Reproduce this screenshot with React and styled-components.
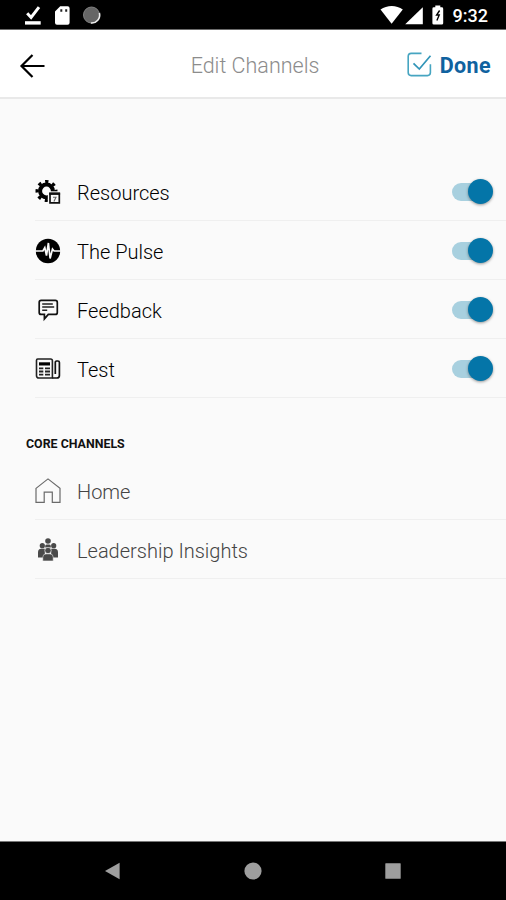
import styled, { createGlobalStyle } from "styled-components";

const channels = [
  { name: "Resources", icon: ResourcesIcon },
  { name: "The Pulse", icon: PulseIcon },
  { name: "Feedback", icon: FeedbackIcon },
  { name: "Test", icon: NewsIcon },
];

const coreChannels = [
  { name: "Home", icon: HomeIcon },
  { name: "Leadership Insights", icon: PeopleIcon },
];

export default function App() {
  return (
    <>
      <GlobalStyle />
      <Screen>
        <StatusBar>
          <StatusLeft />
          <StatusRight />
          <Clock>9:32</Clock>
        </StatusBar>
        <Header>
          <BackButton aria-label="Back">
            <svg width="26" height="26" viewBox="0 0 26 26" fill="none">
              <path
                d="M25.500 13H2.500M13.500 2 2.500 13l11 11"
                stroke="#000"
                strokeWidth="2.200"
              />
            </svg>
          </BackButton>
          <Title>Edit Channels</Title>
          <DoneButton>
            <svg width="25" height="25" viewBox="0 0 25 25" fill="none">
              <path
                d="M14.5 1.4H4.2a3 3 0 0 0-3 3v16.2a3 3 0 0 0 3 3h16.2a3 3 0 0 0 3-3v-8.3"
                stroke="#46a5c1"
                strokeWidth="1.6"
              />
              <path
                d="m6.500 11.300 5.800 5.700L23.500 3.700"
                stroke="#3295b8"
                strokeWidth="1.7"
              />
            </svg>
            <span>Done</span>
          </DoneButton>
        </Header>
        <Content>
          <List>
            {channels.map(({ name, icon: Icon }) => (
              <Row key={name}>
                <Icon />
                <Name>{name}</Name>
                <Switch role="switch" aria-checked="true" aria-label={name}>
                  <Thumb />
                </Switch>
              </Row>
            ))}
          </List>
          <SectionTitle>CORE CHANNELS</SectionTitle>
          <List>
            {coreChannels.map(({ name, icon: Icon }) => (
              <Row key={name}>
                <Icon />
                <Name $muted>{name}</Name>
              </Row>
            ))}
          </List>
        </Content>
        <NavBar>
          <svg width="18" height="20" viewBox="0 0 18 20" fill="#9e9e9e">
            <path d="M1 10 15.600 1.700v16.600z" />
          </svg>
          <svg width="18" height="20" viewBox="0 0 18 20" fill="#9e9e9e">
            <circle cx="9" cy="10" r="8.600" />
          </svg>
          <svg width="18" height="20" viewBox="0 0 18 20" fill="#9e9e9e">
            <rect x="1.300" y="2.300" width="15.400" height="15.400" rx="0.500" />
          </svg>
        </NavBar>
      </Screen>
    </>
  );
}

function StatusLeft() {
  return (
    <svg width="84" height="22" viewBox="0 0 84 22">
      <path d="m3.200 9.200 3.900 4.200L15 3.200" fill="none" stroke="#fff" strokeWidth="3" />
      <path d="M1 17.200h15.700v3.400H1z" fill="#fff" />
      <path
        d="M36.200 2.200h7.400a2 2 0 0 1 2 2v14.500a2 2 0 0 1-2 2H33a2 2 0 0 1-2-2V7.400z"
        fill="#fff"
      />
      <path d="M36.300 5.300h2v2.400h-2zM41.200 5.300h2v2.400h-2z" fill="#222" />
      <circle cx="67.500" cy="11" r="8" fill="#666" stroke="#808080" strokeWidth="1" />
      <path d="M75.400 9a8 8 0 0 1-8.500 10" fill="none" stroke="#eee" strokeWidth="1.600" />
    </svg>
  );
}

function StatusRight() {
  return (
    <StatusIcons width="66" height="22" viewBox="0 0 66 22" fill="#fff">
      <path d="M0.500 5.600C7 .7 16.500.7 22.800 5.600L11.600 19.800z" />
      <path d="M42.800 3.200v17.100H25.200z" />
      <path d="M55.300 3.300V1.500h5v1.800h1.500a1.400 1.400 0 0 1 1.400 1.400v14.500a1.400 1.400 0 0 1-1.400 1.400h-8a1.400 1.400 0 0 1-1.400-1.400V4.700a1.400 1.400 0 0 1 1.400-1.400z" />
      <path
        d="m59.600 6.500-3 4.500h2.600l-2.300 5.500"
        fill="none"
        stroke="#000"
        strokeWidth="1.400"
      />
    </StatusIcons>
  );
}

function ResourcesIcon() {
  return (
    <svg width="26" height="26" viewBox="0 0 26 26" fill="none">
      <circle cx="11.500" cy="12" r="6.400" stroke="#000" strokeWidth="4" />
      <circle
        cx="11.500"
        cy="12"
        r="9.400"
        stroke="#000"
        strokeWidth="3.200"
        strokeDasharray="3.300 4.083"
        strokeDashoffset="1.650"
      />
      <path d="M12.800 12.300H26V26H12.800z" fill="#fafafa" />
      <path d="M15 14.300h9.300v9.600H15z" stroke="#111" strokeWidth="1.700" />
      <path d="M14.200 14.800h10.900" stroke="#111" strokeWidth="2.200" />
      <path d="M18 18.300h3L18.900 22.500" stroke="#666" strokeWidth="1.100" />
    </svg>
  );
}

function PulseIcon() {
  return (
    <svg width="26" height="26" viewBox="0 0 26 26" fill="none">
      <circle cx="13" cy="13" r="12.200" fill="#000" />
      <path
        d="M0 13h7.900l1.900-3.300 1.700 7.800 1.900-12.500 1.700 15.500 2.400-9.500 1.600 2H26"
        stroke="#fafafa"
        strokeWidth="1.700"
      />
    </svg>
  );
}

function FeedbackIcon() {
  return (
    <svg width="26" height="26" viewBox="0 0 26 26" fill="none">
      <path
        d="M6.200 3.400h14.100a2 2 0 0 1 2 2v10a2 2 0 0 1-2 2h-7L9.400 21.900v-4.500H6.200a2 2 0 0 1-2-2v-10a2 2 0 0 1 2-2z"
        stroke="#111"
        strokeWidth="1.700"
      />
      <path d="M7.200 6.900h10.600M7.200 10h12M7.200 13.300h5" stroke="#222" strokeWidth="1.500" />
    </svg>
  );
}

function NewsIcon() {
  return (
    <svg width="26" height="26" viewBox="0 0 26 26" fill="none">
      <path
        d="M2.700 3h12.900a1.800 1.800 0 0 1 1.800 1.800v17.200H3.700a2.200 2.200 0 0 1-2.200-2.200V4.200A1.200 1.200 0 0 1 2.700 3z"
        stroke="#222"
        strokeWidth="1.600"
      />
      <path
        d="M17.400 22h4.400a2.600 2.600 0 0 0 2.600-2.600V6.500a1.500 1.500 0 0 0-1.500-1.500h-1.300a1.300 1.300 0 0 0-1.300 1.300v11.700"
        stroke="#111"
        strokeWidth="1.700"
      />
      <path d="M4 7.900h11" stroke="#000" strokeWidth="3.200" />
      <path
        d="M4 12.400h4.300M10 12.400h5M4 15.500h4.300M10 15.500h5M4 18.700h4.300M10 18.700h5"
        stroke="#222"
        strokeWidth="1.800"
      />
    </svg>
  );
}

function HomeIcon() {
  return (
    <svg width="26" height="26" viewBox="0 0 26 26" fill="none">
      <path
        d="M1 10.400 13 .9l12 9.500v14h-7.700V14.200H9.200v10.200H1z"
        stroke="#6a6a6a"
        strokeWidth="1.200"
      />
    </svg>
  );
}

function PeopleIcon() {
  return (
    <svg width="26" height="26" viewBox="0 0 26 26" fill="#4a4a4a">
      <circle cx="13" cy="4" r="2.800" />
      <circle cx="7.300" cy="8.700" r="2.600" />
      <circle cx="18.700" cy="8.700" r="2.600" />
      <path d="M10.200 10.600V9q0-1.500 1.500-1.500h2.600q1.500 0 1.500 1.500v1.600z" />
      <path d="M3 20.500v-5q0-3.700 3.200-3.700h3.600v8.700zM23 20.500v-5q0-3.700-3.200-3.700h-3.600v8.700z" />
      <circle cx="13" cy="13.500" r="3.100" stroke="#fafafa" strokeWidth="0.500" />
      <path
        d="M7.800 23.900v-3.600q0-3.400 3.200-3.400h4q3.200 0 3.200 3.400v3.600z"
        stroke="#fafafa"
        strokeWidth="0.500"
      />
    </svg>
  );
}

const GlobalStyle = createGlobalStyle`
  * {
    box-sizing: border-box;
  }
  body {
    margin: 0;
    font-family: Roboto, "Liberation Sans", sans-serif;
  }
  svg {
    flex-shrink: 0;
  }
`;

const Screen = styled.div`
  display: flex;
  flex-direction: column;
  width: 506px;
  height: 900px;
  overflow: hidden;
  background: #fafafa;
`;

const StatusBar = styled.div`
  display: flex;
  align-items: center;
  height: 30px;
  padding: 1px 18px 0 24px;
  color: #fff;
  background: #000;
  border-bottom: 1px solid #6b6b6b;
`;

const StatusIcons = styled.svg`
  margin-left: auto;
`;

const Clock = styled.span`
  margin-left: 7px;
  padding-top: 2px;
  font-size: 18px;
  font-weight: 500;
  line-height: 22px;
`;

const Header = styled.header`
  display: grid;
  grid-template-columns: 1fr auto 1fr;
  align-items: center;
  height: 69px;
  padding: 2px 15px 0 19px;
  background: #fff;
  border-bottom: 2px solid #e9e9e9;
`;

const BackButton = styled.button`
  display: flex;
  padding: 2px 0 0;
  border: 0;
  background: none;
`;

const Title = styled.h1`
  margin: 0;
  padding-top: 2px;
  color: #8c8c8c;
  font-size: 21.500px;
  font-weight: 300;
`;

const DoneButton = styled.button`
  display: flex;
  align-items: center;
  justify-content: flex-end;
  gap: 8px;
  padding: 0;
  border: 0;
  background: none;
  color: #10629f;
  font-family: inherit;
  font-size: 21.500px;
  font-weight: 700;

  svg {
    margin-bottom: 1px;
  }
  span {
    padding-top: 1px;
    letter-spacing: 0.4px;
  }
`;

const Content = styled.main`
  flex: 1;
  padding-top: 63px;
`;

const List = styled.ul`
  margin: 0;
  padding: 0 0 0 35px;
  list-style: none;
`;

const Row = styled.li`
  display: flex;
  align-items: center;
  height: 59px;
  padding: 1px 13px 0 0;
  border-bottom: 1px solid #efefef;

  & > svg {
    margin-top: 1px;
  }
`;

const Name = styled.span`
  flex: 1;
  margin-left: 16px;
  padding-top: 2px;
  color: ${({ $muted }) => ($muted ? "#444" : "#000")};
  font-size: 20px;
  font-weight: 300;
  line-height: 24px;
`;

const Switch = styled.span`
  display: flex;
  align-items: center;
  justify-content: flex-end;
  width: 41px;
  height: 18px;
  background: linear-gradient(#a8d0df, #a8d0df) left / 34px 18px no-repeat;
  border-radius: 9px;
`;

const Thumb = styled.span`
  width: 25px;
  height: 25px;
  flex-shrink: 0;
  border-radius: 50%;
  background: #0475a8;
  box-shadow: 0 1px 3px rgba(0, 0, 0, 0.4);
`;

const SectionTitle = styled.h2`
  height: 63px;
  margin: 0;
  padding: 38px 0 0 26px;
  color: #111;
  font-size: 12.400px;
  font-weight: 700;
  line-height: 16px;
`;

const NavBar = styled.nav`
  display: flex;
  align-items: center;
  justify-content: space-between;
  height: 59px;
  padding: 0 104px;
  background: #000;
  border-top: 1px solid #777;
`;
